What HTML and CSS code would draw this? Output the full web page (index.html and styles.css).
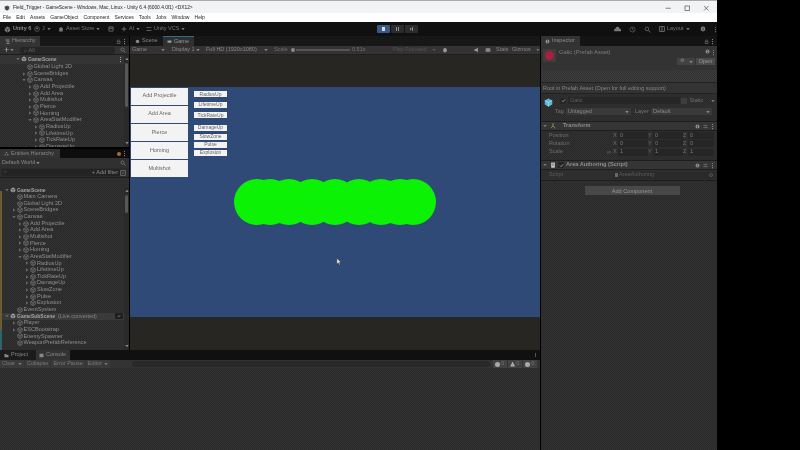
FILE: index.html
```html
<!DOCTYPE html>
<html lang="en">
<head>
    <meta charset="UTF-8">
    <title>Field_Trigger - GameScene - Unity</title>
    <link rel="stylesheet" href="styles.css">
</head>
<body>
    <svg class="defs" width="0" height="0">
        <symbol id="cube" viewBox="0 0 12 12"><path d="M6 1l4.500 2.500v5L6 11 1.500 8.500v-5zM1.500 3.500L6 6l4.500-2.500M6 6v5" fill="none" stroke="currentColor" stroke-width="1.100"/></symbol>
        <symbol id="unity" viewBox="0 0 12 12"><path d="M6 1l4.500 2.500v5L6 11 1.500 8.500v-5z" fill="currentColor"/><path d="M1.500 3.500L6 6l4.500-2.500M6 6v5" fill="none" stroke="#2b2b2b" stroke-width="1.200"/></symbol>
        <symbol id="caret" viewBox="0 0 6 6"><path d="M.5 1.500h5L3 4.800z" fill="currentColor"/></symbol>
        <symbol id="fold" viewBox="0 0 6 6"><path d="M1.500 .5v5L5 3z" fill="currentColor"/></symbol>
        <symbol id="open" viewBox="0 0 6 6"><path d="M.5 1.500h5L3 5z" fill="currentColor"/></symbol>
        <symbol id="dots" viewBox="0 0 4 12"><path d="M1.200 1.500h1.600v1.800H1.200zM1.200 5.100h1.600v1.800H1.200zM1.200 8.700h1.600v1.800H1.200z" fill="currentColor"/></symbol>
        <symbol id="help" viewBox="0 0 10 10"><circle cx="5" cy="5" r="4" fill="currentColor"/><path d="M4.300 3.200h1.400v1.200H4.300zM4.300 5h1.400v2H4.300z" fill="#2b2b2b"/></symbol>
        <symbol id="lock" viewBox="0 0 10 10"><path d="M2.500 4.500h5.500v4.500H2.500zM3.500 4.500V3a1.800 1.800 0 0 1 3.500 0" fill="none" stroke="currentColor" stroke-width="1.100"/></symbol>
        <symbol id="check" viewBox="0 0 8 8"><path d="M1.500 4.200l1.800 1.800 3.300-4" fill="none" stroke="currentColor" stroke-width="1.100"/></symbol>
        <symbol id="sliders" viewBox="0 0 10 10"><path d="M1 3h5M1 7h2M5 7h4M7 1.500v3M4 5.500v3" fill="none" stroke="currentColor" stroke-width="1.200"/></symbol>
    </svg>

    <div class="window">
        <div class="titlebar">
            <svg class="title-icon"><use href="#unity"/></svg>
            <span class="title-text">Field_Trigger - GameScene - Windows, Mac, Linux - Unity 6.4 (6000.4.0f1) &lt;DX12&gt;</span>
            <div class="win-btns">
                <svg viewBox="0 0 10 10"><path d="M1 5h8" stroke="#444" fill="none"/></svg>
                <svg viewBox="0 0 10 10"><path d="M1.500 1.500h7v7h-7z" stroke="#444" fill="none"/></svg>
                <svg viewBox="0 0 10 10"><path d="M1.500 1.500l7 7M8.500 1.500l-7 7" stroke="#444" fill="none"/></svg>
            </div>
        </div>
        <div class="menubar">
            <span>File</span><span>Edit</span><span>Assets</span><span>GameObject</span><span>Component</span><span>Services</span><span>Tools</span><span>Jobs</span><span>Window</span><span>Help</span>
        </div>

        <div class="toolbar">
            <div class="tb-left">
                <svg class="i7"><use href="#unity"/></svg><b class="unity-name">Unity 6</b>
                <span class="tb-acc"><svg class="i6" viewBox="0 0 10 10"><circle cx="5" cy="5" r="4" fill="none" stroke="currentColor"/><circle cx="5" cy="4" r="1.500" fill="currentColor"/></svg> J <svg class="i4"><use href="#caret"/></svg></span>
                <span class="tb-store"><svg class="i6" viewBox="0 0 10 10"><path d="M2 3.500h6v5.500H2zM3.500 3.500V2h3v1.500" fill="currentColor"/></svg> Asset Store <svg class="i4"><use href="#caret"/></svg></span>
                <svg class="i6 tb-pkg" viewBox="0 0 10 10"><path d="M1.500 1.500h7v7h-7zM1.500 4h7" fill="none" stroke="currentColor" stroke-width="1.300"/></svg>
                <span class="tb-ai"><svg class="i6" viewBox="0 0 10 10"><path d="M5 1v8M1 5h8" stroke="currentColor" fill="none" stroke-width="1.400"/></svg> AI <svg class="i4"><use href="#caret"/></svg></span>
                <span class="tb-vcs"><svg class="i6" viewBox="0 0 10 10"><path d="M1 2.500h5M1 7.500h8M7 2.500h2" stroke="currentColor" fill="none" stroke-width="1.300"/></svg> Unity VCS <svg class="i4"><use href="#caret"/></svg></span>
            </div>
            <div class="play-btns">
                <span class="play on"><i class="stop"></i></span>
                <span class="play"><i class="pause"></i></span>
                <span class="play"><i class="step"></i></span>
            </div>
            <div class="tb-right">
                <svg class="i7" viewBox="0 0 12 12"><path d="M1 9a2.500 2.500 0 0 1 1.500-4.500 3.500 3.500 0 0 1 7 .5A2 2 0 0 1 11 9z" fill="currentColor"/></svg>
                <svg class="i7" viewBox="0 0 12 12"><circle cx="6" cy="6" r="4.300" fill="none" stroke="currentColor"/><path d="M6 3.500V6l2 1.200" fill="none" stroke="currentColor"/></svg>
                <svg class="i7" viewBox="0 0 12 12"><circle cx="5" cy="5" r="3.200" fill="none" stroke="currentColor" stroke-width="1.200"/><path d="M7.500 7.500l3.500 3.500" stroke="currentColor" stroke-width="1.400"/></svg>
                <span class="tb-layout"><svg class="i6" viewBox="0 0 10 10"><path d="M1 1h8v8H1zM5 1v8" fill="none" stroke="currentColor" stroke-width="1.400"/></svg> Layout <svg class="i4"><use href="#caret"/></svg></span>
                <svg class="i6"><use href="#help"/></svg>
                <svg class="dots"><use href="#dots"/></svg>
            </div>
        </div>

        <div class="workspace">
            <div class="top-area">
                <div class="left-col">
                    <section class="panel hierarchy">
                        <div class="tabs">
                            <span class="tab tab-hier"><svg class="i5" viewBox="0 0 10 10"><path d="M1 1h8v2H1zM3 4.500h6v2H3zM3 8h6v2H3z" fill="currentColor"/></svg> Hierarchy</span>
                            <span class="tab-tools"><svg class="i5"><use href="#lock"/></svg><svg class="dots"><use href="#dots"/></svg></span>
                        </div>
                        <div class="hier-bar">
                            <span class="plus">+</span><svg class="i4"><use href="#caret"/></svg>
                            <span class="search-box">⌕ All</span>
                            <svg class="i6" viewBox="0 0 12 12"><circle cx="5" cy="5" r="3.200" fill="none" stroke="currentColor" stroke-width="1.200"/><path d="M7.500 7.500l3.500 3.500" stroke="currentColor" stroke-width="1.400"/></svg>
                        </div>
                        <div class="tree-wrap">
                            <div class="tree">
                                <div class="row scene top-scene d0"><svg class="arrow"><use href="#open"/></svg><svg class="node"><use href="#unity"/></svg>GameScene<svg class="dots row-dots"><use href="#dots"/></svg></div>
                                <div class="row d1"><span class="arrow"></span><svg class="node"><use href="#cube"/></svg>Global Light 2D</div>
                                <div class="row d1"><svg class="arrow"><use href="#fold"/></svg><svg class="node"><use href="#cube"/></svg>SceneBridges</div>
                                <div class="row d1"><svg class="arrow"><use href="#open"/></svg><svg class="node"><use href="#cube"/></svg>Canvas</div>
                                <div class="row d2"><svg class="arrow"><use href="#fold"/></svg><svg class="node"><use href="#cube"/></svg>Add Projectile</div>
                                <div class="row d2"><svg class="arrow"><use href="#fold"/></svg><svg class="node"><use href="#cube"/></svg>Add Area</div>
                                <div class="row d2"><svg class="arrow"><use href="#fold"/></svg><svg class="node"><use href="#cube"/></svg>Multishot</div>
                                <div class="row d2"><svg class="arrow"><use href="#fold"/></svg><svg class="node"><use href="#cube"/></svg>Pierce</div>
                                <div class="row d2"><svg class="arrow"><use href="#fold"/></svg><svg class="node"><use href="#cube"/></svg>Homing</div>
                                <div class="row d2"><svg class="arrow"><use href="#open"/></svg><svg class="node"><use href="#cube"/></svg>AreaStatModifier</div>
                                <div class="row d3"><svg class="arrow"><use href="#fold"/></svg><svg class="node"><use href="#cube"/></svg>RadiusUp</div>
                                <div class="row d3"><svg class="arrow"><use href="#fold"/></svg><svg class="node"><use href="#cube"/></svg>LifetimeUp</div>
                                <div class="row d3"><svg class="arrow"><use href="#fold"/></svg><svg class="node"><use href="#cube"/></svg>TickRateUp</div>
                                <div class="row d3"><svg class="arrow"><use href="#fold"/></svg><svg class="node"><use href="#cube"/></svg>DamageUp</div>
                            </div>
                            <div class="scrollbar sb-hier"><svg class="i4"><use href="#caret"/></svg><i class="thumb"></i><svg class="i4"><use href="#caret"/></svg></div>
                        </div>
                    </section>
                    <section class="panel entities">
                        <div class="tabs">
                            <span class="tab tab-ent"><svg class="i5" viewBox="0 0 10 10"><path d="M5 1l2 3H3zM2.500 5l2 3.500h-4zM7.500 5l2 3.500h-4z" fill="currentColor"/></svg> Entities Hierarchy</span>
                            <span class="tab-tools"><i class="orange"></i><svg class="dots"><use href="#dots"/></svg></span>
                        </div>
                        <div class="world-bar"><span>Default World <svg class="i4"><use href="#caret"/></svg></span><svg class="i6" viewBox="0 0 12 12"><circle cx="5" cy="5" r="3.200" fill="none" stroke="currentColor" stroke-width="1.200"/><path d="M7.500 7.500l3.500 3.500" stroke="currentColor" stroke-width="1.400"/></svg></div>
                        <div class="filter-bar"><span class="filter-box">⌕</span><span class="add-filter">+ Add filter</span><svg class="i6" viewBox="0 0 10 10"><path d="M1 1h8v8H1z" fill="none" stroke="currentColor"/><path d="M3 5h4" stroke="currentColor"/></svg></div>
                        <div class="tree-wrap ent-wrap">
                            <div class="tree">
                                <div class="row scene e0"><svg class="arrow"><use href="#open"/></svg><svg class="node"><use href="#unity"/></svg>GameScene</div>
                                <div class="row e1"><span class="arrow"></span><svg class="node"><use href="#cube"/></svg>Main Camera</div>
                                <div class="row e1"><span class="arrow"></span><svg class="node"><use href="#cube"/></svg>Global Light 2D</div>
                                <div class="row e1"><svg class="arrow"><use href="#fold"/></svg><svg class="node"><use href="#cube"/></svg>SceneBridges</div>
                                <div class="row e1"><svg class="arrow"><use href="#open"/></svg><svg class="node"><use href="#cube"/></svg>Canvas</div>
                                <div class="row e2"><svg class="arrow"><use href="#fold"/></svg><svg class="node"><use href="#cube"/></svg>Add Projectile</div>
                                <div class="row e2"><svg class="arrow"><use href="#fold"/></svg><svg class="node"><use href="#cube"/></svg>Add Area</div>
                                <div class="row e2"><svg class="arrow"><use href="#fold"/></svg><svg class="node"><use href="#cube"/></svg>Multishot</div>
                                <div class="row e2"><svg class="arrow"><use href="#fold"/></svg><svg class="node"><use href="#cube"/></svg>Pierce</div>
                                <div class="row e2"><svg class="arrow"><use href="#fold"/></svg><svg class="node"><use href="#cube"/></svg>Homing</div>
                                <div class="row e2"><svg class="arrow"><use href="#open"/></svg><svg class="node"><use href="#cube"/></svg>AreaStatModifier</div>
                                <div class="row e3"><svg class="arrow"><use href="#fold"/></svg><svg class="node"><use href="#cube"/></svg>RadiusUp</div>
                                <div class="row e3"><svg class="arrow"><use href="#fold"/></svg><svg class="node"><use href="#cube"/></svg>LifetimeUp</div>
                                <div class="row e3"><svg class="arrow"><use href="#fold"/></svg><svg class="node"><use href="#cube"/></svg>TickRateUp</div>
                                <div class="row e3"><svg class="arrow"><use href="#fold"/></svg><svg class="node"><use href="#cube"/></svg>DamageUp</div>
                                <div class="row e3"><svg class="arrow"><use href="#fold"/></svg><svg class="node"><use href="#cube"/></svg>SlowZone</div>
                                <div class="row e3"><svg class="arrow"><use href="#fold"/></svg><svg class="node"><use href="#cube"/></svg>Pulse</div>
                                <div class="row e3"><svg class="arrow"><use href="#fold"/></svg><svg class="node"><use href="#cube"/></svg>Explosion</div>
                                <div class="row e1"><span class="arrow"></span><svg class="node"><use href="#cube"/></svg>EventSystem</div>
                                <div class="row scene e0 subscene"><svg class="arrow"><use href="#open"/></svg><svg class="node"><use href="#unity"/></svg>GameSubScene<em>(Live converted)</em><span class="sub-check"><svg class="i4"><use href="#check"/></svg></span></div>
                                <div class="row e1"><svg class="arrow"><use href="#fold"/></svg><svg class="node"><use href="#cube"/></svg>Player</div>
                                <div class="row e1"><svg class="arrow"><use href="#fold"/></svg><svg class="node"><use href="#cube"/></svg>ESCBootstrap</div>
                                <div class="row e1"><span class="arrow"></span><svg class="node"><use href="#cube"/></svg>EnemySpawner</div>
                                <div class="row e1"><span class="arrow"></span><svg class="node"><use href="#cube"/></svg>WeaponPrefabReference</div>
                            </div>
                            <div class="scrollbar sb-ent"><svg class="i4"><use href="#caret"/></svg><i class="thumb"></i><svg class="i4"><use href="#caret"/></svg></div>
                        </div>
                    </section>
                </div>

                <section class="panel game">
                    <div class="tabs game-tabs">
                        <span class="tab-plain"><svg class="i5" viewBox="0 0 10 10"><circle cx="5" cy="5" r="3.500" fill="currentColor"/></svg> Scene</span>
                        <span class="tab tab-game"><svg class="i5" viewBox="0 0 10 10"><path d="M1 3h8v4.500H1z" fill="currentColor"/></svg> Game</span>
                    </div>
                    <div class="game-bar">
                        <span class="gb-game">Game<svg class="i4"><use href="#caret"/></svg></span>
                        <span class="gb-display">Display 1<svg class="i4"><use href="#caret"/></svg></span>
                        <span class="gb-res">Full HD (1920x1080)<svg class="i4"><use href="#caret"/></svg></span>
                        <span class="gb-scale">Scale</span>
                        <i class="knob"></i><i class="track"></i>
                        <span class="gb-value">0.51x</span>
                        <span class="gb-focus">Play Focused<svg class="i4"><use href="#caret"/></svg></span>
                        <svg class="i6 gb-bug" viewBox="0 0 10 10"><ellipse cx="5" cy="5.500" rx="3" ry="3.800" fill="currentColor"/></svg>
                        <svg class="i6 gb-sound" viewBox="0 0 10 10"><path d="M1 3.500h2.500L6.500 1v8L3.500 6.500H1z" fill="currentColor"/></svg>
                        <svg class="i6 gb-gfx" viewBox="0 0 10 10"><path d="M1 2h8v6H1z" fill="currentColor"/></svg>
                        <span class="gb-stats">Stats</span>
                        <span class="gb-gizmos">Gizmos</span>
                        <svg class="i4"><use href="#caret"/></svg>
                    </div>
                    <div class="letterbox"></div>
                    <div class="viewport">
                        <div class="big-btns">
                            <div class="big-btn">Add Projectile</div>
                            <div class="big-btn">Add Area</div>
                            <div class="big-btn">Pierce</div>
                            <div class="big-btn">Homing</div>
                            <div class="big-btn">Multishot</div>
                        </div>
                        <div class="small-btns">
                            <div class="small-btn">RadiusUp</div>
                            <div class="small-btn">LifetimeUp</div>
                            <div class="small-btn">TickRateUp</div>
                            <div class="small-btn gap-wide">DamageUp</div>
                            <div class="small-btn gap-mid">SlowZone</div>
                            <div class="small-btn gap-thin">Pulse</div>
                            <div class="small-btn gap-thin">Explosion</div>
                        </div>
                        <!-- area circles, placed freely on the game canvas -->
                        <svg class="blob" viewBox="0 0 202 46">
                            <g fill="#0cf205">
                                <circle cx="23" cy="23" r="23"/><circle cx="36" cy="23" r="23"/><circle cx="55" cy="23" r="23"/><circle cx="78" cy="23" r="23"/><circle cx="101" cy="23" r="23"/><circle cx="125" cy="23" r="23"/><circle cx="147" cy="23" r="23"/><circle cx="166" cy="23" r="23"/><circle cx="179" cy="23" r="23"/>
                            </g>
                        </svg>
                        <svg class="cursor" viewBox="0 0 8 11"><path d="M1 .5v8l2-1.800 1.300 3 1.400-.6L4.400 6.200H7z" fill="#eee" stroke="#222" stroke-width=".6"/></svg>
                    </div>
                    <div class="letterbox"></div>
                </section>
            </div>

            <section class="panel console">
                <div class="tabs console-tabs">
                    <span class="tab-plain tab-project"><svg class="i5" viewBox="0 0 10 10"><path d="M1 2h3l1 1.300h4V8.500H1z" fill="currentColor"/></svg> Project</span>
                    <span class="tab tab-console"><svg class="i5" viewBox="0 0 10 10"><path d="M1 1.500h8v7H1z" fill="currentColor"/></svg> Console</span>
                    <span class="console-tick"></span>
                </div>
                <div class="console-bar">
                    <span class="cb-btn cb-clear">Clear<svg class="i4"><use href="#caret"/></svg></span>
                    <span class="cb-btn">Collapse</span>
                    <span class="cb-btn">Error Pause</span>
                    <span class="cb-btn">Editor<svg class="i4"><use href="#caret"/></svg></span>
                    <span class="cb-search"></span>
                    <span class="count"><i class="c-dot"></i>0</span>
                    <span class="count"><i class="c-tri"></i>0</span>
                    <span class="count"><i class="c-dot"></i>0</span>
                </div>
                <div class="console-body"></div>
            </section>
        </div>

        <aside class="panel inspector">
            <div class="tabs insp-tabs">
                <span class="tab tab-insp"><svg class="i5"><use href="#help"/></svg> Inspector</span>
                <span class="tab-tools"><svg class="i5"><use href="#lock"/></svg><svg class="dots"><use href="#dots"/></svg></span>
            </div>
            <div class="asset-head">
                <div class="asset-icon"><i></i></div>
                <span class="asset-name">Galic (Prefab Asset)</span>
                <svg class="i5"><use href="#help"/></svg>
                <svg class="dots"><use href="#dots"/></svg>
                <div class="asset-btns"><span class="btn-small">⚙<svg class="i4"><use href="#caret"/></svg></span><span class="btn-open">Open</span></div>
            </div>
            <div class="dither-strip"></div>
            <div class="prefab-note">Root in Prefab Asset (Open for full editing support)</div>
            <div class="go-head">
                <svg class="go-cube" viewBox="0 0 12 12"><path d="M6 .5l5 2.800v5.400L6 11.500 1 8.700V3.300z" fill="#5bb8d4"/><path d="M1 3.300L6 6l5-2.700M6 6v5.500" fill="none" stroke="#d5f0f7" stroke-width=".7"/></svg>
                <div class="go-body">
                    <div class="go-row">
                        <span class="chk"><svg><use href="#check"/></svg></span>
                        <span class="field name-field">Galic</span>
                        <span class="chk chk-empty"></span>
                        <span class="static-label">Static</span>
                        <svg class="i4"><use href="#caret"/></svg>
                    </div>
                    <div class="tag-row">
                        <span class="tag-label">Tag</span>
                        <span class="field select tag-select">Untagged<svg class="i4"><use href="#caret"/></svg></span>
                        <span class="layer-label">Layer</span>
                        <span class="field select layer-select">Default<svg class="i4"><use href="#caret"/></svg></span>
                    </div>
                </div>
            </div>
            <div class="comp-head comp-first">
                <svg class="arrow"><use href="#open"/></svg>
                <svg class="comp-icon" viewBox="0 0 10 10"><path d="M5 1v4M5 5l3.500 3M5 5L1.500 8" fill="none" stroke="#8fbf4a" stroke-width="1.200"/><path d="M5 .5L6.300 2H3.700z" fill="#7ab"/><path d="M9 9l-2-.2L8.200 7z" fill="#c55"/></svg>
                <b class="comp-title">Transform</b>
                <span class="comp-tools"><svg class="i5"><use href="#help"/></svg><svg class="i5"><use href="#sliders"/></svg><svg class="dots"><use href="#dots"/></svg></span>
            </div>
            <div class="vec-rows">
                <div class="vec-row"><span class="vec-name">Position</span><span class="axis">X</span><span class="field num">0</span><span class="axis">Y</span><span class="field num">0</span><span class="axis">Z</span><span class="field num">0</span></div>
                <div class="vec-row"><span class="vec-name">Rotation</span><span class="axis">X</span><span class="field num">0</span><span class="axis">Y</span><span class="field num">0</span><span class="axis">Z</span><span class="field num">0</span></div>
                <div class="vec-row"><span class="vec-name">Scale<small>∞</small></span><span class="axis">X</span><span class="field num">1</span><span class="axis">Y</span><span class="field num">1</span><span class="axis">Z</span><span class="field num">1</span></div>
            </div>
            <div class="comp-head">
                <svg class="arrow"><use href="#open"/></svg>
                <svg class="comp-icon" viewBox="0 0 10 10"><path d="M2 1h6v8.500H2z" fill="#ccc"/><path d="M3.500 3.500h3M3.500 5.500h3" stroke="#333" stroke-width=".8"/></svg>
                <span class="chk comp-chk"><svg><use href="#check"/></svg></span>
                <b class="comp-title comp-script">Area Authoring (Script)</b>
                <span class="comp-tools"><svg class="i5"><use href="#help"/></svg><svg class="i5"><use href="#sliders"/></svg><svg class="dots"><use href="#dots"/></svg></span>
            </div>
            <div class="script-row">
                <span class="script-label">Script</span>
                <span class="field script-field"><i class="script-dot"></i>AreaAuthoring<i class="script-target"></i></span>
            </div>
            <div class="add-wrap"><button class="add-btn">Add Component</button></div>
        </aside>
    </div>
</body>
</html>
```

FILE: styles.css
```css
* {
    box-sizing: border-box;
}

html, body {
    margin: 0;
    height: 100%;
    overflow: hidden;
}

body {
    background: #000;
    font-family: "Liberation Sans", Arial, sans-serif;
    font-size: 5.5px;
    line-height: 1;
    color: #8c8c8c;
}

.defs {
    position: absolute;
}

svg {
    flex: none;
    display: block;
}

i, em {
    font-style: normal;
}

.i4 { width: 4px; height: 4px; }
.i5 { width: 5px; height: 5px; }
.i6 { width: 6px; height: 6px; }
.i7 { width: 7px; height: 7px; }

.dots {
    width: 3px;
    height: 7px;
}

.window {
    width: 717px;
    height: 450px;
    display: grid;
    grid-template-columns: 540px 177px;
    grid-template-rows: 13px 9px 14px 1fr;
    background: #000;
    filter: blur(0.3px);
}

.titlebar {
    grid-column: 1 / 3;
    display: flex;
    align-items: center;
    padding: 2px 0 0 4px;
    background: #f1f3f4;
    border-top: 1px solid #a9abac;
    color: #222;
    font-size: 4.850px;
}

.title-icon {
    width: 6px;
    height: 6px;
    margin-right: 3px;
    color: #555;
}

.title-text {
    flex: 1;
}

.win-btns {
    display: flex;
    gap: 12.500px;
    margin-right: 8px;
}

.win-btns svg {
    width: 6.500px;
    height: 6.500px;
}

.menubar {
    grid-column: 1 / 3;
    display: flex;
    align-items: center;
    gap: 5.200px;
    padding-left: 3px;
    background: #fff;
    color: #222;
    font-size: 5px;
}

.toolbar {
    grid-column: 1 / 3;
    display: flex;
    align-items: center;
    background: #101010;
    color: #777;
    position: relative;
}

.tb-left, .tb-right {
    display: flex;
    align-items: center;
}

.tb-left > span, .tb-layout {
    display: flex;
    align-items: center;
    gap: 2px;
}

.tb-left {
    padding-left: 4px;
    width: 377px;
}

.unity-name {
    margin-left: 2px;
    width: 21px;
    color: #8a8a8a;
}

.tb-acc { width: 24px; }
.tb-store { width: 50px; }
.tb-pkg { margin-right: 7px; }
.tb-ai { width: 25px; }

.play-btns {
    display: flex;
    gap: 1.500px;
    width: 236px;
}

.play {
    width: 12.500px;
    height: 8px;
    background: #2c2c2c;
    display: flex;
    align-items: center;
    justify-content: center;
    border-radius: 1px;
}

.play.on {
    background: #3a5a84;
}

.play i {
    display: block;
    width: 3.500px;
    height: 3.500px;
    background: #8e8e8e;
}

.play .stop {
    background: #cfd8e6;
}

.play .pause {
    background: linear-gradient(to right, #8e8e8e 35%, transparent 35%, transparent 65%, #8e8e8e 65%);
}

.play .step {
    background: #8e8e8e;
    clip-path: polygon(0 0, 70% 50%, 70% 0, 100% 0, 100% 100%, 70% 100%, 70% 50%, 0 100%);
}

.tb-right {
    gap: 8px;
    margin-left: 1px;
}

.tb-layout {
    margin-left: 0;
    width: 33px;
}

/* main area */
.workspace {
    grid-column: 1;
    display: flex;
    flex-direction: column;
    min-height: 0;
}

.top-area {
    display: flex;
    height: 314px;
}

.left-col {
    width: 130px;
    display: flex;
    flex-direction: column;
    gap: 2px;
    border-right: 1px solid #000;
}

.panel {
    background-color: #2d2d2d;
    background-image: repeating-conic-gradient(#2a2a2a 0 25%, #313131 0 50%);
    background-size: 2px 2px;
    min-width: 0;
}

.tabs {
    display: flex;
    align-items: stretch;
    height: 10px;
    background: #171717;
    color: #888;
}

.tab {
    display: flex;
    align-items: center;
    gap: 2px;
    background: #333;
}

.tab-plain {
    display: flex;
    align-items: center;
    gap: 2px;
}

.tab-tools {
    margin-left: auto;
    display: flex;
    align-items: center;
    gap: 2px;
    padding-right: 3px;
    color: #888;
}

.tab-hier {
    width: 40px;
    padding-left: 5px;
}

.hierarchy {
    height: 111px;
}

.entities {
    height: 201px;
}

.hier-bar {
    height: 9px;
    display: flex;
    align-items: center;
    padding: 0 3px;
    gap: 1px;
    background: #313131;
    border-bottom: 1px solid #1c1c1c;
    color: #888;
}

.plus {
    font-size: 9px;
    margin-left: 1px;
    color: #aaa;
}

.search-box {
    flex: 1;
    margin: 0 4px 0 5px;
    height: 7px;
    padding: 1px 4px;
    background: #252525;
    border-radius: 3px;
    color: #666;
}

.tree-wrap {
    display: flex;
    height: 92px;
    overflow: hidden;
}

.ent-wrap {
    height: 172px;
    padding-top: 9px;
    border-left: 2px solid transparent;
    border-image: linear-gradient(to bottom, transparent 8%, #6a5c34 8%, #6a5c34 88%, #2f6468 88%) 1;
}

.tree {
    flex: 1;
    min-width: 0;
}

.row {
    display: flex;
    align-items: center;
    height: 6.650px;
    white-space: nowrap;
    color: #8f8f8f;
    font-size: 5.600px;
}

.row .arrow {
    width: 4px;
    height: 4px;
    margin-right: 1px;
    color: #6a6a6a;
}

.node {
    width: 6px;
    height: 6px;
    margin-right: 1px;
    color: #8f8f8f;
}

.scene {
    font-weight: bold;
    font-size: 5px;
    color: #a3a3a3;
}

.scene .node {
    color: #a8a8a8;
}

.top-scene {
    height: 8.700px;
    background: #343434;
    position: relative;
    margin-right: -5px;
}

.row-dots {
    margin-left: auto;
    margin-right: 7px;
}

.d0 { padding-left: 16px; }
.d1 { padding-left: 21.500px; }
.d2 { padding-left: 28px; }
.d3 { padding-left: 34px; }

.e0 { padding-left: 3px; }
.e1 { padding-left: 9.500px; }
.e2 { padding-left: 16px; }
.e3 { padding-left: 23px; }

.subscene {
    background: #3a3a3a;
    margin-left: 0;
}

.subscene em {
    margin-left: 3px;
    font-weight: normal;
    font-size: 5.400px;
    color: #858585;
}

.sub-check {
    margin-left: auto;
    width: 8px;
    height: 6px;
    background: #1f1f1f;
    display: flex;
    align-items: center;
    justify-content: center;
    margin-right: 1px;
    color: #aaa;
}

.scrollbar {
    width: 5px;
    display: flex;
    flex-direction: column;
    align-items: center;
    background: #2a2a2a;
    color: #888;
    padding-top: 2px;
    position: relative;
    z-index: 1;
}

.scrollbar > svg:first-child {
    transform: rotate(180deg);
}

.scrollbar .thumb {
    width: 2.500px;
    margin-top: 2px;
    background: #575757;
    border-radius: 2px;
}

.scrollbar > svg:last-child {
    margin-top: auto;
    margin-bottom: 2px;
}

.sb-hier .thumb { height: 44px; }
.sb-ent .thumb { height: 18px; }

.tab-ent {
    width: 60px;
    padding-left: 4px;
}

.entities .tabs {
    height: 9px;
    background: #0d0d0d;
}

.orange {
    width: 4px;
    height: 4px;
    border-radius: 50%;
    background: #a3702c;
}

.world-bar {
    display: flex;
    align-items: center;
    justify-content: space-between;
    height: 10px;
    padding: 0 3px 0 2px;
    background: #303030;
}

.world-bar span {
    display: flex;
    align-items: center;
    gap: 1px;
}

.filter-bar {
    display: flex;
    align-items: center;
    height: 10px;
    padding: 0 3px 0 2px;
    gap: 2px;
    background: #2b2b2b;
    border-bottom: 1px solid #1c1c1c;
}

.filter-box {
    flex: 1;
    color: #666;
    background: #232323;
    height: 7px;
    padding-left: 2px;
}

.add-filter {
    position: relative;
    margin-left: -30px;
}

/* game view */
.game {
    width: 410px;
    display: flex;
    flex-direction: column;
}

.game-tabs {
    padding-left: 5px;
}

.game-tabs .tab-plain {
    width: 28px;
}

.tab-game {
    width: 31px;
    padding-left: 4px;
    background: #2f2f2f;
    border-top: 1px solid #2f6d8f;
    color: #9a9a9a;
}

.game-bar {
    display: flex;
    align-items: center;
    height: 9px;
    background: #333;
    color: #6f6f6f;
    padding-left: 2px;
    border-bottom: 1px solid #1f1f1f;
}

.game-bar > span {
    display: flex;
    align-items: center;
    justify-content: space-between;
    flex: none;
}

.gb-game { width: 33px; margin-right: 7px; color: #888; }
.gb-display { width: 28px; margin-right: 6px; color: #888; }
.gb-res { width: 62px; margin-right: 6px; color: #888; }
.gb-scale { width: 14px; margin-right: 3px; }

.knob {
    width: 4px;
    height: 4px;
    border-radius: 50%;
    background: #888;
}

.track {
    width: 57px;
    height: 1.500px;
    background: #555;
    margin-left: 1px;
    margin-right: 2px;
}

.gb-value { width: 14px; margin-right: 27px; color: #777; }
.gb-focus { width: 43px; margin-right: 6px; color: #555; }
.gb-bug { margin-right: 26px; color: #999; }
.gb-sound { margin-right: 5px; color: #999; }
.gb-gfx { margin-right: 5px; color: #888; }
.gb-stats { width: 16px; color: #888; }
.gb-gizmos { width: 24px; color: #888; }

.letterbox {
    height: 32px;
    background: #282622;
}

.game .letterbox:last-child {
    height: 33px;
}

.viewport {
    position: relative;
    height: 230px;
    background: #304a78;
    display: flex;
    padding-left: 1px;
    color: #555;
}

.big-btns {
    width: 57px;
    display: flex;
    flex-direction: column;
    gap: 1.200px;
    padding-top: 0.500px;
}

.big-btn {
    height: 17px;
    display: flex;
    align-items: center;
    justify-content: center;
    background: #f3f3f3;
    color: #666;
    font-size: 5.500px;
}

.small-btns {
    margin-left: 6px;
    padding-top: 4px;
    width: 33px;
}

.small-btn {
    height: 6px;
    margin-bottom: 4.500px;
    display: flex;
    align-items: center;
    justify-content: center;
    background: #f3f3f3;
    color: #666;
    font-size: 5px;
}

.small-btn.gap-wide {
    margin-top: 6.500px;
    margin-bottom: 3px;
}

.small-btn.gap-mid {
    margin-bottom: 2px;
}

.small-btn.gap-thin {
    margin-bottom: 2px;
}

.blob {
    position: absolute;
    left: 104px;
    top: 92px;
    width: 202px;
    height: 46px;
}

.cursor {
    position: absolute;
    left: 206px;
    top: 171px;
    width: 6px;
    height: 8px;
}

/* console */
.console {
    flex: 1;
    display: flex;
    flex-direction: column;
    min-height: 0;
}

.console-tabs {
    background: #101010;
    position: relative;
}

.tab-project {
    width: 36px;
    padding-left: 4px;
    background: #1c1c1c;
}

.tab-console {
    width: 34px;
    padding-left: 3px;
}

.console-tick {
    margin: 3px 4px 3px auto;
    width: 1.500px;
    background: #555;
}

.console-bar {
    display: flex;
    align-items: center;
    height: 8px;
    gap: 1px;
    background: #333;
    color: #7a7a7a;
}

.cb-btn {
    display: flex;
    flex: none;
    align-items: center;
    gap: 2px;
    height: 100%;
    padding: 0 2px;
    white-space: nowrap;
    background: #3a3a3a;
}

.cb-clear {
    width: 24px;
    justify-content: space-between;
}

.cb-search {
    margin-left: 21px;
    width: 358px;
    height: 6px;
    background: #292929;
    border-radius: 3px;
    margin-right: 2px;
}

.count {
    width: 14px;
    flex: none;
    display: flex;
    align-items: center;
    gap: 1px;
    height: 100%;
    padding-left: 2px;
    background: #424242;
    color: #777;
}

.c-dot {
    width: 5px;
    height: 5px;
    border-radius: 50%;
    background: #aaa;
}

.c-tri {
    width: 5px;
    height: 5px;
    background: #aaa;
    clip-path: polygon(50% 0, 100% 100%, 0 100%);
}

.console-body {
    flex: 1;
}

/* inspector */
.inspector {
    grid-column: 2;
    min-height: 0;
    border-left: 1px solid #000;
    overflow: hidden;
}

.insp-tabs {
    background: #141414;
}

.tab-insp {
    width: 39px;
    padding-left: 4px;
    color: #8e8e8e;
}

.asset-head {
    display: flex;
    height: 24px;
    padding: 3px 2px 0 2px;
    gap: 2px;
    position: relative;
    background: #333;
    color: #8a8a8a;
}

.asset-icon {
    width: 13px;
    height: 13px;
    background: #3e3e3e;
    display: flex;
    align-items: center;
    justify-content: center;
}

.asset-icon i {
    width: 9px;
    height: 9px;
    border-radius: 50%;
    background: #a8203c;
}

.asset-name {
    flex: 1;
    font-size: 5.800px;
    margin: 1px 0 0 1px;
    color: #7c7c7c;
}

.asset-btns {
    position: absolute;
    right: 2px;
    top: 12px;
    display: flex;
    gap: 1px;
}

.btn-small {
    width: 18px;
    height: 7px;
    background: #424242;
    display: flex;
    align-items: center;
    justify-content: space-around;
    font-size: 4.500px;
}

.btn-open {
    width: 19px;
    height: 7px;
    background: #4a4a4a;
    color: #999;
    text-align: center;
    line-height: 7px;
}

.dither-strip {
    height: 13px;
    background-color: #343434;
    background-image: repeating-conic-gradient(#2e2e2e 0 25%, #404040 0 50%);
    background-size: 2px 2px;
    border-bottom: 1px solid #222;
}

.prefab-note {
    height: 11px;
    padding: 3px 0 0 2px;
    background: #333;
    border-bottom: 1px solid #222;
    color: #858585;
    font-size: 5.500px;
}

.go-head {
    display: flex;
    height: 27px;
    padding: 3px 2px 0 2px;
    color: #7a7a7a;
}

.go-cube {
    width: 9px;
    height: 11px;
    margin: 0 0 0 1px;
}

.go-body {
    flex: 1;
    display: flex;
    flex-direction: column;
    gap: 4px;
    min-width: 0;
}

.go-row, .tag-row {
    display: flex;
    align-items: center;
    height: 7px;
}

.go-row {
    padding-left: 7px;
    gap: 2px;
}

.tag-row {
    gap: 3px;
    padding-left: 2px;
}

.chk {
    width: 6px;
    height: 6px;
    flex: none;
    background: #252525;
    color: #bbb;
    display: flex;
    align-items: center;
    justify-content: center;
}

.chk svg {
    width: 5px;
    height: 5px;
}

.chk-empty {
    background: #3d3d3d;
    margin-left: -1px;
}

.field {
    display: flex;
    align-items: center;
    height: 7px;
    background: #262626;
    color: #7d7d7d;
    padding-left: 2px;
    border-radius: 1px;
}

.name-field {
    width: 115px;
    color: #5f5f5f;
}

.static-label {
    width: 20px;
    color: #6f6f6f;
}

.select {
    justify-content: space-between;
    padding-right: 2px;
    background: #3a3a3a;
}

.tag-label {
    width: 8px;
    color: #777;
}

.tag-select {
    width: 65px;
    color: #8a8a8a;
}

.layer-label {
    width: 13px;
    margin-left: 1px;
    color: #777;
}

.layer-select {
    width: 61px;
    color: #8a8a8a;
}

.comp-head {
    display: flex;
    align-items: center;
    height: 10px;
    padding-left: 2px;
    background: #353535;
    border-top: 1px solid #1e1e1e;
    border-bottom: 1px solid #1e1e1e;
    color: #8e8e8e;
}

.comp-head .arrow {
    width: 4px;
    height: 4px;
    margin-right: 3px;
    color: #777;
}

.comp-icon {
    width: 6px;
    height: 6px;
}

.comp-title {
    margin-left: 7px;
    color: #8e8e8e;
    font-size: 5.600px;
}

.comp-script {
    margin-left: 2px;
}

.comp-chk {
    margin-left: 2px;
}

.comp-tools {
    margin-left: auto;
    display: flex;
    align-items: center;
    gap: 3px;
    padding-right: 3px;
}

.vec-rows {
    height: 29px;
    padding: 1px 2px 0 8px;
    display: flex;
    flex-direction: column;
    gap: 1.300px;
}

.vec-row {
    display: grid;
    grid-template-columns: 64px 5px 27px 3px 5px 27px 3px 5px 26px;
    align-items: center;
    height: 7px;
    color: #6f6f6f;
}

.vec-name {
    display: flex;
    justify-content: space-between;
    padding-right: 2px;
}

.vec-name small {
    font-size: 6px;
    line-height: 1;
}

.vec-row .field.num:nth-of-type(3),
.vec-row .field.num:nth-of-type(5) {
    margin-right: -3px;
    grid-column: 3;
}

.vec-row .field.num:nth-of-type(5) {
    grid-column: 6;
}

.vec-row .axis:nth-of-type(4) {
    grid-column: 5;
}

.vec-row .axis:nth-of-type(6) {
    grid-column: 8;
}

.vec-row .field.num:nth-of-type(7) {
    grid-column: 9;
}

.script-row {
    display: flex;
    align-items: center;
    height: 11px;
    padding: 0 2px 0 8px;
    border-bottom: 1px solid #1e1e1e;
}

.script-label {
    width: 64px;
    color: #5f5f5f;
}

.script-field {
    flex: 1;
    background: #2a2a2a;
    color: #5c5c5c;
    gap: 1px;
}

.script-dot {
    width: 3px;
    height: 4px;
    background: #6a6a6a;
}

.script-target {
    width: 4px;
    height: 4px;
    margin-left: auto;
    margin-right: 2px;
    border-radius: 50%;
    border: 1px solid #555;
}

.add-wrap {
    display: flex;
    justify-content: center;
    padding: 5px 0 0 6px;
}

.add-btn {
    width: 95px;
    height: 9px;
    padding: 0;
    border: none;
    background: #484848;
    color: #999;
    font: 5.600px "Liberation Sans", Arial, sans-serif;
}
```
